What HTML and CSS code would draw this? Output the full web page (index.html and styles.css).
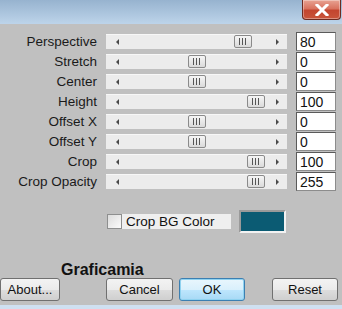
FILE: index.html
```html
<!DOCTYPE html>
<html lang="en">
<head>
    <meta charset="UTF-8">
    <title>Perspective</title>
    <link rel="stylesheet" href="styles.css">
</head>
<body>

<div class="window">
    <div class="titlebar">
        <button class="close-btn" aria-label="Close">
            <svg width="16" height="12" viewBox="0 0 16 12">
                <path d="M3 1 L13 11 M13 1 L3 11" stroke="#fff" stroke-width="3" stroke-linecap="square"/>
            </svg>
        </button>
    </div>

    <div class="settings">
        <label>Perspective</label>
        <div class="scroll"><span class="thumb" style="left:128px"></span></div>
        <input type="text" value="80">

        <label>Stretch</label>
        <div class="scroll"><span class="thumb" style="left:82px"></span></div>
        <input type="text" value="0">

        <label>Center</label>
        <div class="scroll"><span class="thumb" style="left:82px"></span></div>
        <input type="text" value="0">

        <label>Height</label>
        <div class="scroll"><span class="thumb" style="left:141px"></span></div>
        <input type="text" value="100">

        <label>Offset X</label>
        <div class="scroll"><span class="thumb" style="left:82px"></span></div>
        <input type="text" value="0">

        <label>Offset Y</label>
        <div class="scroll"><span class="thumb" style="left:82px"></span></div>
        <input type="text" value="0">

        <label>Crop</label>
        <div class="scroll"><span class="thumb" style="left:141px"></span></div>
        <input type="text" value="100">

        <label>Crop Opacity</label>
        <div class="scroll"><span class="thumb" style="left:141px"></span></div>
        <input type="text" value="255">
    </div>

    <div class="bg-row">
        <div class="check">
            <span class="box"></span>
            <span>Crop BG Color</span>
        </div>
        <div class="swatch"></div>
    </div>

    <div class="brand">Graficamia</div>

    <div class="buttons">
        <button class="btn about">About...</button>
        <button class="btn cancel">Cancel</button>
        <button class="btn ok">OK</button>
        <button class="btn reset">Reset</button>
    </div>

    <div class="frame-bottom"></div>
</div>

</body>
</html>
```

FILE: styles.css
```css
body {
    margin: 0;
    padding: 0;
    font-family: "Liberation Sans", Arial, sans-serif;
    font-size: 13px;
    color: #111;
    background-color: #c0c0c0;
}

.window {
    width: 342px;
    height: 309px;
    overflow: hidden;
    background-color: #c0c0c0;
}

.titlebar {
    height: 24px;
    background: linear-gradient(#97b3cf, #bdd4ea);
    display: flex;
    justify-content: flex-end;
    padding-right: 1px;
}

.close-btn {
    width: 39px;
    height: 20px;
    padding: 0;
    border: 1px solid #6e2b21;
    border-top: none;
    border-radius: 0 0 4px 4px;
    background: linear-gradient(#e8a393 0%, #d9735f 45%, #c3452f 55%, #c9543a 100%);
    display: flex;
    align-items: center;
    justify-content: center;
    box-shadow: inset 0 0 0 1px rgba(255, 255, 255, 0.35);
}

.settings {
    display: grid;
    grid-template-columns: 97px 181px 40px;
    column-gap: 9px;
    row-gap: 1px;
    align-items: center;
    padding-top: 8px;
}

.settings label {
    text-align: right;
    line-height: 19px;
    font-size: 13.5px;
    color: #1a1a1a;
}

.scroll {
    position: relative;
    height: 15px;
    background-color: #ececec;
    border-top: 1px solid #f7f7f7;
    box-sizing: border-box;
}

.scroll::before,
.scroll::after {
    content: "";
    position: absolute;
    top: 4px;
    border-top: 3px solid transparent;
    border-bottom: 3px solid transparent;
}

.scroll::before {
    left: 10px;
    border-right: 3px solid #4a4a4a;
}

.scroll::after {
    left: 170px;
    border-left: 3px solid #4a4a4a;
}

.thumb {
    position: absolute;
    top: 0;
    width: 18px;
    height: 13px;
    box-sizing: border-box;
    border: 1px solid #8a8a8a;
    border-radius: 2px;
    background: linear-gradient(#f6f6f6, #dadada);
}

.thumb::before {
    content: "";
    position: absolute;
    left: 4px;
    top: 2px;
    width: 8px;
    height: 7px;
    background: repeating-linear-gradient(90deg, #555 0 1px, transparent 1px 3px);
}

.settings input {
    width: 40px;
    height: 19px;
    box-sizing: border-box;
    margin: 0;
    padding: 0 3px;
    border: 1px solid #5a5a5a;
    border-right-color: #8c8c8c;
    border-bottom-color: #8c8c8c;
    background-color: white;
    font-family: "Liberation Sans", Arial, sans-serif;
    font-size: 14px;
    color: #111;
}

.bg-row {
    display: flex;
    align-items: center;
    gap: 8px;
    margin-top: 19px;
    padding-left: 107px;
}

.check {
    display: flex;
    align-items: center;
    gap: 4px;
    width: 124px;
    height: 15px;
    background-color: #efefef;
    font-size: 13.5px;
}

.box {
    width: 15px;
    height: 15px;
    box-sizing: border-box;
    border: 1px solid #8e8f8f;
    background: linear-gradient(135deg, #dcdcdc, #fbfbfb);
}

.swatch {
    width: 47px;
    height: 23px;
    box-sizing: border-box;
    border: 2px solid #f2f2f2;
    border-top-color: #9a9a9a;
    border-left-color: #9a9a9a;
    background-color: #0b5b73;
}

.brand {
    margin-top: 29px;
    padding-left: 61px;
    height: 16px;
    line-height: 16px;
    font-size: 16px;
    font-weight: bold;
    color: #111;
}

.buttons {
    display: flex;
    height: 23px;
}

.btn {
    flex-shrink: 0;
    height: 23px;
    padding: 0;
    border: 1px solid #707070;
    border-radius: 3px;
    background: linear-gradient(#f3f3f3 0%, #ebebeb 50%, #dddddd 51%, #cfcfcf 100%);
    font-family: "Liberation Sans", Arial, sans-serif;
    font-size: 13px;
    color: #111;
}

.about { width: 60px; }
.cancel { width: 67px; margin-left: 46px; }
.ok { width: 66px; margin-left: 6px; }
.reset { width: 66px; margin-left: 27px; }

.btn.ok {
    border-color: #3c7fb1;
    background: linear-gradient(#e9f6fd 0%, #d9f0fc 50%, #bee6fd 51%, #a7d9f5 100%);
    box-shadow: inset 0 0 0 1px #8fd2f0;
}

.frame-bottom {
    margin-top: 4px;
    height: 4px;
    background-color: #cfe0f1;
}
```
